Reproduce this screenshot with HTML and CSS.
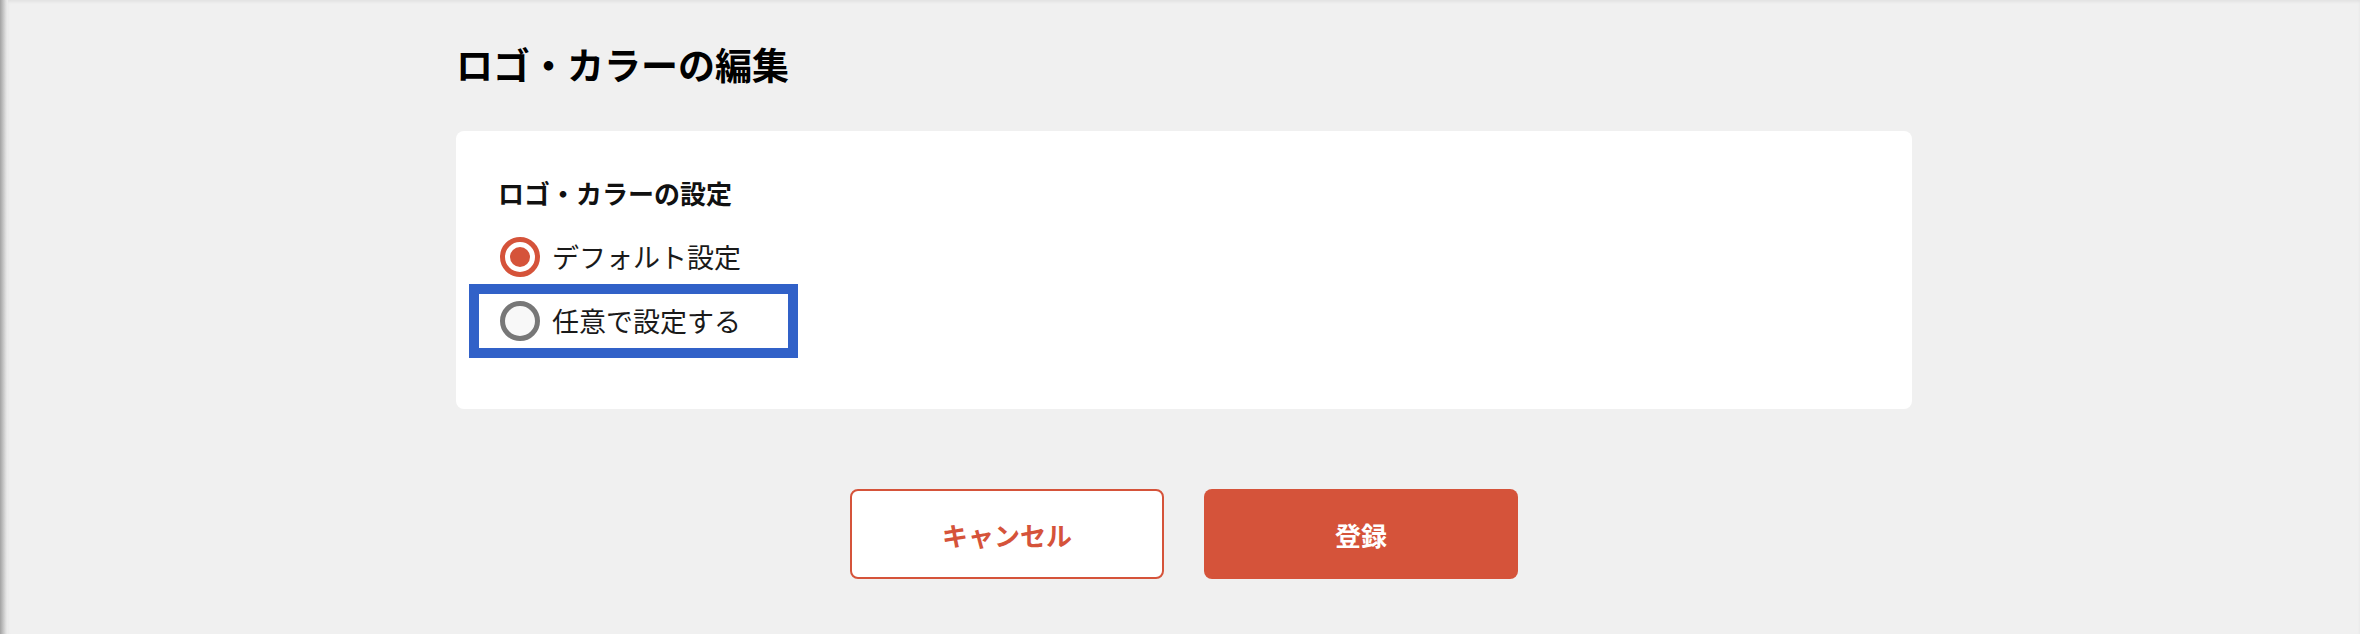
FILE: index.html
```html
<!DOCTYPE html>
<html lang="ja">
<head>
<meta charset="utf-8">
<title>ロゴ・カラーの編集</title>
<link rel="stylesheet" href="styles.css">
</head>
<body>
<div class="page">
  <div class="edge"></div>
  <main class="main">
    <h1 class="title">ロゴ・カラーの編集</h1>
    <section class="card">
      <h2 class="card-heading">ロゴ・カラーの設定</h2>
      <div class="options">
        <label class="option">
          <span class="radio radio-checked"><span class="radio-dot"></span></span>
          <span class="option-text">デフォルト設定</span>
        </label>
        <label class="option option-focus">
          <span class="radio radio-empty"></span>
          <span class="option-text">任意で設定する</span>
        </label>
      </div>
    </section>
    <div class="actions">
      <button class="btn btn-cancel">キャンセル</button>
      <button class="btn btn-submit">登録</button>
    </div>
  </main>
</div>
</body>
</html>
```
FILE: styles.css
```css
* { box-sizing: border-box; }
html, body {
  margin: 0;
  padding: 0;
  background: #f0f0f0;
  font-family: "Noto Sans CJK JP", "Noto Sans", sans-serif;
  color: #111;
}
.page {
  display: flex;
  width: 2360px;
  height: 634px;
  overflow: hidden;
}
.edge {
  width: 8px;
  flex: none;
  background: linear-gradient(to right, #a2a2a2, #c4c4c4 40%, #e2e2e2 75%, #eeeeee);
}
.main {
  flex: 1;
  padding: 42px 448px 0;
  box-shadow: inset 0 2px 3px rgba(0, 0, 0, 0.06);
}
.title {
  margin: 0;
  font-size: 37px;
  line-height: 44px;
  font-weight: 700;
  color: #000;
}
.card {
  margin-top: 45px;
  height: 278px;
  background: #fff;
  border-radius: 8px;
  padding: 44px 0 0 23px;
}
.card-heading {
  margin: 0 0 0 19px;
  font-size: 26px;
  line-height: 36px;
  font-weight: 700;
  color: #111;
}
.options {
  margin-top: 19px;
  display: flex;
  flex-direction: column;
  align-items: flex-start;
  gap: 10px;
}
.option {
  display: flex;
  align-items: center;
  height: 54px;
  padding: 0 47px 0 21px;
  cursor: pointer;
}
.option-focus {
  outline: 10px solid #3161c8;
}
.radio {
  width: 40px;
  height: 40px;
  border-radius: 50%;
  flex: none;
  display: flex;
  align-items: center;
  justify-content: center;
}
.radio-checked {
  border: 5px solid #d5533a;
  background: #fff;
}
.radio-dot {
  width: 20px;
  height: 20px;
  border-radius: 50%;
  background: #d5533a;
}
.radio-empty {
  border: 5px solid #777;
  background: #f8f8f8;
}
.option-text {
  margin-left: 12px;
  font-size: 27px;
  line-height: 36px;
  color: #1a1a1a;
}
.actions {
  margin-top: 80px;
  display: flex;
  justify-content: center;
  gap: 40px;
}
.btn {
  width: 314px;
  height: 90px;
  border-radius: 8px;
  font-family: "Noto Sans CJK JP", "Noto Sans", sans-serif;
  font-size: 26px;
  font-weight: 700;
  cursor: pointer;
}
.btn-cancel {
  background: #fff;
  border: 2px solid #d5533a;
  color: #d5533a;
}
.btn-submit {
  background: #d5533a;
  border: none;
  color: #fff;
}
```
